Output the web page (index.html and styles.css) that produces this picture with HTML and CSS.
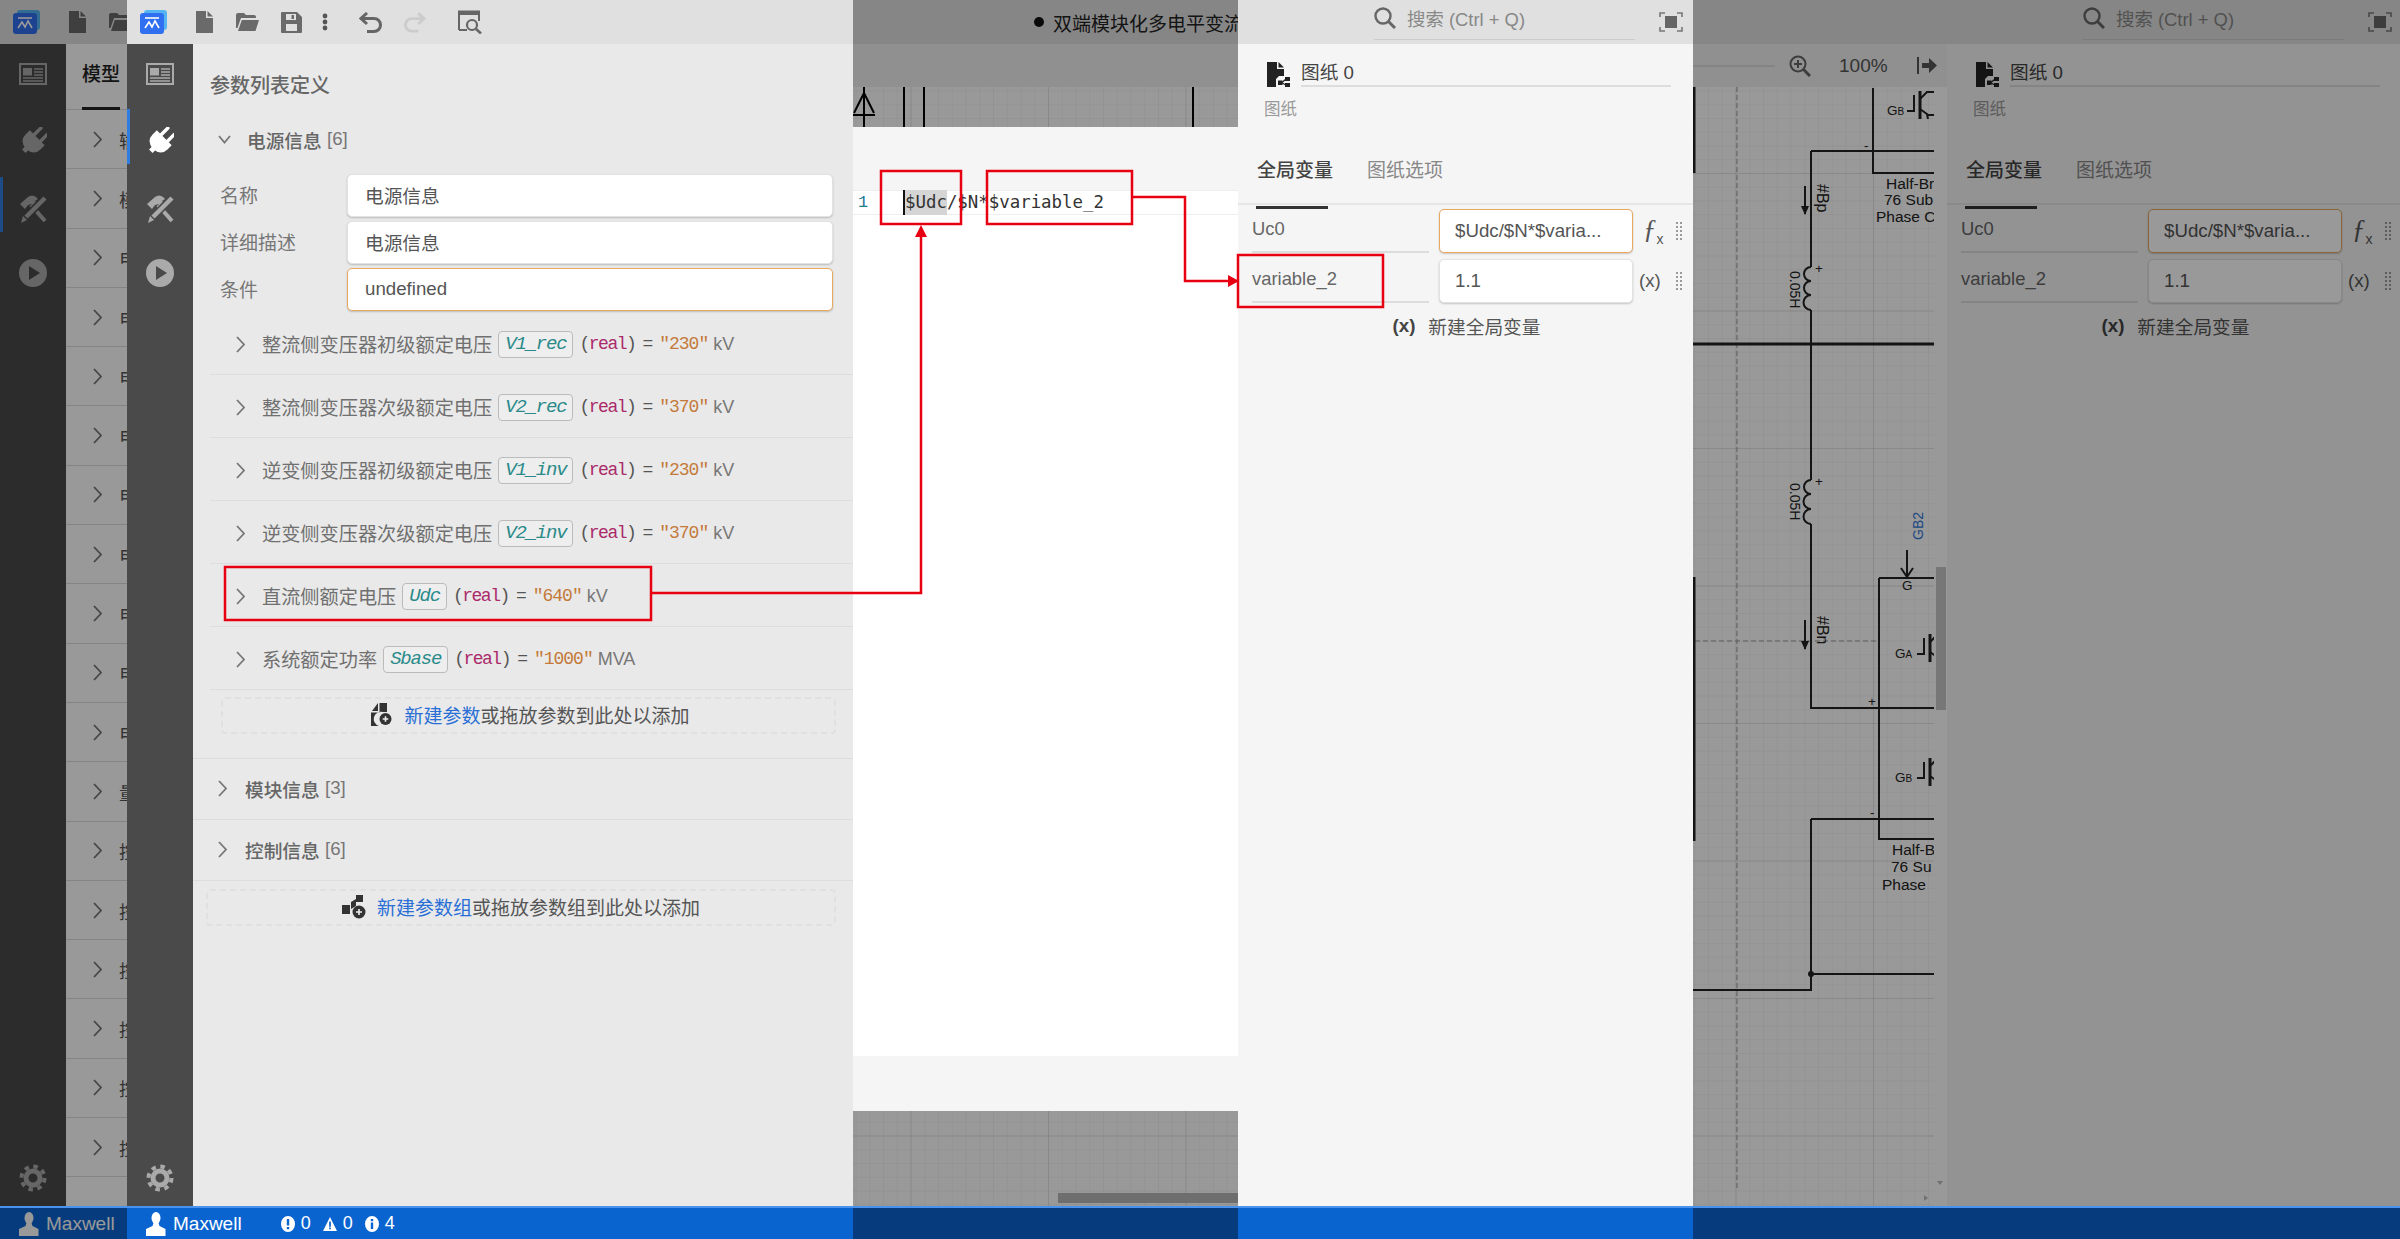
FILE: index.html
```html
<!DOCTYPE html>
<html lang="zh">
<head>
    <meta charset="UTF-8">
    <title>参数列表定义</title>
    <link rel="stylesheet" href="styles.css">
</head>
<body>

<!-- 图标 -->
<svg class="sprite" xmlns="http://www.w3.org/2000/svg">
    <symbol id="i-logo" viewBox="0 0 27 24">
        <rect x="4" y="0" width="23" height="20" rx="3" fill="#55b4f2"/>
        <rect x="0" y="3" width="24" height="21" rx="3" fill="#2f6ff0"/>
        <path d="M5 8h14" stroke="#fff" stroke-width="1.6" fill="none"/>
        <path d="M5 18l4-6 3 5 3-6 4 7" stroke="#fff" stroke-width="1.6" fill="none"/>
    </symbol>
    <symbol id="i-file" viewBox="0 0 17 22">
        <path d="M0 0h10v7h7v15H0zM11.500 0L17 5.500h-5.500z" fill="#6a6a6a"/>
    </symbol>
    <symbol id="i-folder" viewBox="0 0 23 18">
        <path d="M0 2q0-2 2-2h6l2 2h8q2 0 2 2v1H5L1.500 15H0zM5.800 7H23l-3.500 11H2z" fill="#6a6a6a"/>
    </symbol>
    <symbol id="i-save" viewBox="0 0 21 21">
        <path fill-rule="evenodd" d="M0 1q0-1 1-1h15l5 5v15q0 1-1 1H1q-1 0-1-1zM5 2v6h10V2zM5 12v7h11v-7z" fill="#6a6a6a"/>
        <rect x="10.500" y="3" width="2.500" height="4" fill="#6a6a6a"/>
    </symbol>
    <symbol id="i-dots" viewBox="0 0 6 18">
        <circle cx="3" cy="3" r="2.400" fill="#555"/><circle cx="3" cy="9" r="2.400" fill="#555"/><circle cx="3" cy="15" r="2.400" fill="#555"/>
    </symbol>
    <symbol id="i-undo" viewBox="0 0 23 21">
        <path d="M8 1L2 6.500 8 12M2 6.500h13a6.500 6.500 0 0 1 0 13H8" fill="none" stroke="currentColor" stroke-width="3"/>
    </symbol>
    <symbol id="i-redo" viewBox="0 0 23 21">
        <path d="M15 1l6 5.500L15 12M21 6.500H8a6.500 6.500 0 0 0 0 13h7" fill="none" stroke="currentColor" stroke-width="3"/>
    </symbol>
    <symbol id="i-docsearch" viewBox="0 0 24 24">
        <path d="M1 20V1.500h20V11M1 20h8" fill="none" stroke="#666" stroke-width="2"/>
        <rect x="1" y="1" width="20" height="4" fill="#666"/>
        <circle cx="14" cy="15" r="5" fill="none" stroke="#666" stroke-width="2.200"/>
        <path d="M18 19l5 4.500" stroke="#666" stroke-width="2.600"/>
    </symbol>
    <symbol id="i-news" viewBox="0 0 28 22">
        <rect x="1" y="1" width="26" height="20" fill="none" stroke="currentColor" stroke-width="2"/>
        <rect x="4" y="5" width="9" height="7.500" fill="currentColor"/>
        <path d="M15 6h9M15 9h9M15 12h9M4 15h20M4 18h20" stroke="currentColor" stroke-width="1.600"/>
    </symbol>
    <symbol id="i-plug" viewBox="0 0 28 30">
        <g transform="rotate(45 14 15)" fill="currentColor">
            <rect x="8" y="-2" width="3.400" height="13" rx="1.500"/>
            <rect x="17" y="-2" width="3.400" height="13" rx="1.500"/>
            <path d="M3.500 9h21v6q0 9-10.500 10Q3.500 24 3.500 15z"/>
            <rect x="11.500" y="23" width="5" height="5"/>
        </g>
    </symbol>
    <symbol id="i-tools" viewBox="0 0 27 28">
        <path d="M0 9l8-7q4-3 8 0l2 2-3 2 3 3-3 3-3-3-4 1-3 4z" fill="currentColor"/>
        <path d="M11 10l14 16" stroke="currentColor" stroke-width="4" fill="none"/>
        <path d="M25 3L6 22" stroke="#4a4a4a" stroke-width="7.500" fill="none"/>
        <path d="M25 3L6 22" stroke="currentColor" stroke-width="4.500" fill="none"/>
        <path d="M3 21l4 4-6 3z" fill="currentColor"/>
    </symbol>
    <symbol id="i-play" viewBox="0 0 28 28">
        <path fill-rule="evenodd" d="M14 0a14 14 0 1 0 0 28 14 14 0 0 0 0-28zM10 7l11 7-11 7z" fill="currentColor"/>
    </symbol>
    <symbol id="i-gear" viewBox="0 0 28 28">
        <circle cx="14" cy="14" r="11.500" fill="none" stroke="currentColor" stroke-width="4" stroke-dasharray="4.500 4.530"/>
        <circle cx="14" cy="14" r="7" fill="none" stroke="currentColor" stroke-width="5"/>
    </symbol>
    <symbol id="i-search" viewBox="0 0 22 22">
        <circle cx="9" cy="9" r="7.500" fill="none" stroke="#666" stroke-width="2.400"/>
        <path d="M14.500 14.500L21 21" stroke="#666" stroke-width="3"/>
    </symbol>
    <symbol id="i-focus" viewBox="0 0 24 20">
        <path d="M1 5V1h5M18 1h5v4M23 15v4h-5M6 19H1v-4" fill="none" stroke="#777" stroke-width="1.600"/>
        <rect x="6" y="4" width="12" height="12" fill="#666"/>
    </symbol>
    <symbol id="i-sheet" viewBox="0 0 23 25">
        <path d="M0 0h10v7h7v7h-5l-3 3v8H0z" fill="#222"/>
        <path d="M11.500 0L17 5.500h-5.500z" fill="#222"/>
        <rect x="11" y="18.500" width="4.500" height="4.500" fill="#222"/>
        <rect x="18" y="15" width="5" height="4" fill="#222"/>
        <rect x="18" y="21" width="5" height="4" fill="#222"/>
        <path d="M15 20.500l4-3.500M15 21l4 2" stroke="#222" stroke-width="1.200"/>
    </symbol>
    <symbol id="i-addparam" viewBox="0 0 21 23">
        <path d="M1 8l6-8v8z" fill="#333"/>
        <path d="M8.500 0H16v9h-4a7 7 0 0 0-4 14H0V9.500h8.500z" fill="#333"/>
        <circle cx="14.500" cy="16" r="6" fill="#333"/>
        <path d="M14.500 13.200v5.600M11.700 16h5.600" stroke="#eee" stroke-width="1.600"/>
    </symbol>
    <symbol id="i-addgroup" viewBox="0 0 24 24">
        <rect x="0" y="10" width="8" height="9" fill="#333"/>
        <path d="M9 7l5-3v7l-5 3z" fill="#333"/>
        <rect x="14" y="0" width="7" height="7" fill="#333"/>
        <circle cx="17" cy="17" r="6.500" fill="#333"/>
        <path d="M17 14v6M14 17h6" stroke="#eee" stroke-width="1.600"/>
    </symbol>
    <symbol id="i-user" viewBox="0 0 20 24">
        <ellipse cx="10" cy="6" rx="4.500" ry="6" fill="currentColor"/>
        <path d="M7.500 11h5l1 3 6 3v7H0v-7l6.500-3z" fill="currentColor"/>
    </symbol>
    <symbol id="i-error" viewBox="0 0 14 16">
        <path fill-rule="evenodd" d="M7 0a7 8 0 1 0 0 16A7 8 0 0 0 7 0zM5.800 3h2.400v6.500H5.800zM5.800 11h2.400v2.200H5.800z" fill="#fff"/>
    </symbol>
    <symbol id="i-warn" viewBox="0 0 16 16">
        <path fill-rule="evenodd" d="M8 0l8 16H0zM7 5h2v6H7zM7 12h2v2H7z" fill="#fff"/>
    </symbol>
    <symbol id="i-info" viewBox="0 0 14 16">
        <path fill-rule="evenodd" d="M7 0a7 8 0 1 0 0 16A7 8 0 0 0 7 0zM5.800 3h2.400v2.200H5.800zM5.800 6.500h2.400V13H5.800z" fill="#fff"/>
    </symbol>
    <symbol id="i-right" viewBox="0 0 9 17">
        <path d="M1 1l7 7.500L1 16" fill="none" stroke="#777" stroke-width="1.800"/>
    </symbol>
    <symbol id="i-down" viewBox="0 0 13 9">
        <path d="M1 1l5.500 6.500L12 1" fill="none" stroke="#777" stroke-width="1.800"/>
    </symbol>
    <symbol id="i-grip" viewBox="0 0 8 19">
        <path d="M1 1h2M5 1h2M1 5h2M5 5h2M1 9h2M5 9h2M1 13h2M5 13h2M1 17h2M5 17h2" stroke="#999" stroke-width="2"/>
    </symbol>
    <symbol id="i-zoomin" viewBox="0 0 22 22">
        <circle cx="9" cy="9" r="7.500" fill="none" stroke="#666" stroke-width="2"/>
        <path d="M14.500 14.500L21 21" stroke="#666" stroke-width="3"/>
        <path d="M5 9h8M9 5v8" stroke="#666" stroke-width="2"/>
    </symbol>
    <symbol id="i-collapse" viewBox="0 0 21 17">
        <path d="M1 0v17" stroke="#555" stroke-width="2"/>
        <path d="M5 6h7V1l8 7.500-8 7.500v-5H5z" fill="#555"/>
    </symbol>
    <symbol id="i-igbt" viewBox="0 0 27 30">
        <path d="M0 22h7V6" fill="none" stroke="#222" stroke-width="2"/>
        <path d="M13 2v28" stroke="#222" stroke-width="3"/>
        <path d="M13 10l7-7h7M13 20l7 5 1 5M21 26h6" fill="none" stroke="#222" stroke-width="2"/>
    </symbol>
</svg>

<div class="main">

    <!-- 左侧：变暗的模型列表 -->
    <section class="slice dim">
        <div class="toolbar">
            <svg class="t-logo"><use href="#i-logo"/></svg>
            <svg class="t-file"><use href="#i-file"/></svg>
            <svg class="t-folder"><use href="#i-folder"/></svg>
        </div>
        <div class="workspace">
            <nav class="rail rail-tools-on">
                <svg class="rail-news"><use href="#i-news"/></svg>
                <svg class="rail-plug"><use href="#i-plug"/></svg>
                <svg class="rail-tools"><use href="#i-tools"/></svg>
                <svg class="rail-play"><use href="#i-play"/></svg>
                <svg class="rail-gear"><use href="#i-gear"/></svg>
            </nav>
            <div class="model-list">
                <div class="model-tab"><span>模型</span></div>
                <div class="model-row"><svg class="chev"><use href="#i-right"/></svg>输</div>
                <div class="model-row"><svg class="chev"><use href="#i-right"/></svg>模</div>
                <div class="model-row"><svg class="chev"><use href="#i-right"/></svg>电</div>
                <div class="model-row"><svg class="chev"><use href="#i-right"/></svg>电</div>
                <div class="model-row"><svg class="chev"><use href="#i-right"/></svg>电</div>
                <div class="model-row"><svg class="chev"><use href="#i-right"/></svg>电</div>
                <div class="model-row"><svg class="chev"><use href="#i-right"/></svg>电</div>
                <div class="model-row"><svg class="chev"><use href="#i-right"/></svg>电</div>
                <div class="model-row"><svg class="chev"><use href="#i-right"/></svg>电</div>
                <div class="model-row"><svg class="chev"><use href="#i-right"/></svg>电</div>
                <div class="model-row"><svg class="chev"><use href="#i-right"/></svg>电</div>
                <div class="model-row"><svg class="chev"><use href="#i-right"/></svg>量</div>
                <div class="model-row"><svg class="chev"><use href="#i-right"/></svg>控</div>
                <div class="model-row"><svg class="chev"><use href="#i-right"/></svg>控</div>
                <div class="model-row"><svg class="chev"><use href="#i-right"/></svg>控</div>
                <div class="model-row"><svg class="chev"><use href="#i-right"/></svg>控</div>
                <div class="model-row"><svg class="chev"><use href="#i-right"/></svg>控</div>
                <div class="model-row"><svg class="chev"><use href="#i-right"/></svg>控</div>
            </div>
        </div>
    </section>

    <!-- 参数列表定义 -->
    <section class="slice">
        <div class="toolbar">
            <svg class="t-logo"><use href="#i-logo"/></svg>
            <svg class="t-file"><use href="#i-file"/></svg>
            <svg class="t-folder"><use href="#i-folder"/></svg>
            <svg class="t-save"><use href="#i-save"/></svg>
            <svg class="t-dots"><use href="#i-dots"/></svg>
            <svg class="t-undo"><use href="#i-undo"/></svg>
            <svg class="t-redo"><use href="#i-redo"/></svg>
            <svg class="t-doc"><use href="#i-docsearch"/></svg>
        </div>
        <div class="workspace">
            <nav class="rail rail-plug-on">
                <svg class="rail-news"><use href="#i-news"/></svg>
                <svg class="rail-plug rail-white"><use href="#i-plug"/></svg>
                <svg class="rail-tools"><use href="#i-tools"/></svg>
                <svg class="rail-play"><use href="#i-play"/></svg>
                <svg class="rail-gear"><use href="#i-gear"/></svg>
            </nav>
            <div class="params">
                <h2 class="page-title">参数列表定义</h2>

                <div class="group group-open">
                    <div class="group-head"><svg class="chev-down"><use href="#i-down"/></svg>电源信息 <span class="count">[6]</span></div>
                    <div class="form">
                        <label class="field"><span>名称</span><input class="input" value="电源信息"></label>
                        <label class="field"><span>详细描述</span><input class="input" value="电源信息"></label>
                        <label class="field"><span>条件</span><input class="input input-focus" value="undefined"></label>
                    </div>

                    <div class="param"><svg class="chev"><use href="#i-right"/></svg>整流侧变压器初级额定电压<code class="tag">V1_rec</code><code class="type">(<b>real</b>) = </code><code class="val">"230"</code><span class="unit">kV</span></div>
                    <div class="param"><svg class="chev"><use href="#i-right"/></svg>整流侧变压器次级额定电压<code class="tag">V2_rec</code><code class="type">(<b>real</b>) = </code><code class="val">"370"</code><span class="unit">kV</span></div>
                    <div class="param"><svg class="chev"><use href="#i-right"/></svg>逆变侧变压器初级额定电压<code class="tag">V1_inv</code><code class="type">(<b>real</b>) = </code><code class="val">"230"</code><span class="unit">kV</span></div>
                    <div class="param"><svg class="chev"><use href="#i-right"/></svg>逆变侧变压器次级额定电压<code class="tag">V2_inv</code><code class="type">(<b>real</b>) = </code><code class="val">"370"</code><span class="unit">kV</span></div>
                    <div class="param"><svg class="chev"><use href="#i-right"/></svg>直流侧额定电压<code class="tag">Udc</code><code class="type">(<b>real</b>) = </code><code class="val">"640"</code><span class="unit">kV</span></div>
                    <div class="param"><svg class="chev"><use href="#i-right"/></svg>系统额定功率<code class="tag">Sbase</code><code class="type">(<b>real</b>) = </code><code class="val">"1000"</code><span class="unit">MVA</span></div>

                    <div class="drop drop-param"><svg class="drop-icon"><use href="#i-addparam"/></svg><a>新建参数</a>或拖放参数到此处以添加</div>
                </div>

                <div class="group"><div class="group-head"><svg class="chev"><use href="#i-right"/></svg>模块信息 <span class="count">[3]</span></div></div>
                <div class="group"><div class="group-head"><svg class="chev"><use href="#i-right"/></svg>控制信息 <span class="count">[6]</span></div></div>

                <div class="drop drop-group"><svg class="drop-icon-wide"><use href="#i-addgroup"/></svg><a>新建参数组</a>或拖放参数组到此处以添加</div>
            </div>
        </div>
    </section>

    <!-- 中间：公式编辑器 -->
    <section class="slice center">
        <div class="title-bar dim"><span class="title-dot"></span>双端模块化多电平变流器</div>
        <div class="canvas-tools dim"></div>
        <div class="canvas canvas-top dim">
            <svg class="wires" viewBox="0 0 385 40">
                <path d="M0 28h22M11 0v40M1 26L11 6l10 20" fill="none" stroke="#000" stroke-width="2"/>
                <path d="M51 0v40M71 0v40M340 0v40" stroke="#000" stroke-width="2"/>
            </svg>
        </div>
        <div class="editor">
            <div class="editor-top"></div>
            <div class="code-line"><span class="line-no">1</span><code class="code"><span class="sel">$Udc</span>/$N*$variable_2</code></div>
        </div>
        <div class="editor-foot"></div>
        <div class="canvas canvas-bottom dim"><div class="hscroll"></div></div>
    </section>

    <!-- 图纸属性面板 -->
    <section class="slice">
        <aside class="panel">
            <div class="panel-head">
                <div class="search"><svg class="search-icon"><use href="#i-search"/></svg>搜索 (Ctrl + Q)</div>
                <svg class="focus-icon"><use href="#i-focus"/></svg>
            </div>
            <div class="sheet-title"><svg class="sheet-icon"><use href="#i-sheet"/></svg><div class="sheet-name">图纸 0</div></div>
            <div class="sheet-sub">图纸</div>
            <div class="tabs"><span class="tab tab-on">全局变量</span><span class="tab">图纸选项</span></div>
            <div class="var-row">
                <div class="var-name">Uc0</div>
                <input class="input var-input input-focus" value="$Udc/$N*$varia...">
                <span class="fx">ƒ<sub>x</sub></span>
                <svg class="grip"><use href="#i-grip"/></svg>
            </div>
            <div class="var-row">
                <div class="var-name">variable_2</div>
                <input class="input var-input" value="1.1">
                <span class="var-x">(x)</span>
                <svg class="grip"><use href="#i-grip"/></svg>
            </div>
            <div class="var-new"><b>(x)</b>新建全局变量</div>
        </aside>
    </section>

    <!-- 右侧：变暗的画布和面板 -->
    <section class="slice dim split">
        <div class="right-col">
            <div class="title-bar"></div>
            <div class="canvas-tools canvas-zoom">
                <span class="zoom-line"></span>
                <svg class="zoom-icon"><use href="#i-zoomin"/></svg>
                <span class="zoom-text">100%</span>
                <svg class="collapse-icon"><use href="#i-collapse"/></svg>
            </div>
            <div class="canvas canvas-main">
                <svg class="circuit" viewBox="0 0 254 1119">
                    <path class="dash" d="M44 0v1103M2 554h184"/>
                    <path class="thick" d="M1 0v86M1 490v264M0 257h241"/>
                    <path class="wire" d="M180 1v85h61M118 64h123M118 64v116M118 223v170M118 437v184h123"/>
                    <path class="wire" d="M186 491h55M186 491v261h55M118 732h123M118 732v171H0M118 887h123"/>
                    <path class="wire" d="M118 180a7 7 0 0 0 0 14a7 7 0 0 0 0 14a7 7 0 0 0 0 15M118 393a7 7 0 0 0 0 14a7 7 0 0 0 0 15a7 7 0 0 0 0 15"/>
                    <circle cx="118" cy="887" r="3" fill="#222"/>
                    <path class="wire" d="M112 99v28M112 533v29M214 463v27M208 481l6 9 6-9"/>
                    <path d="M108 119l4 9 4-9zM108 554l4 9 4-9z" fill="#222"/>
                    <text class="tx" transform="translate(124 97) rotate(90)">#Bp</text>
                    <text class="tx" transform="translate(124 529) rotate(90)">#Bn</text>
                    <text class="tx tx-val" transform="translate(97 184) rotate(90)">0.05H</text>
                    <text class="tx tx-val" transform="translate(97 396) rotate(90)">0.05H</text>
                    <text class="tx tx-val tx-blue" transform="translate(230 453) rotate(-90)">GB2</text>
                    <text class="tx-sm" x="122" y="186">+</text>
                    <text class="tx-sm" x="122" y="399">+</text>
                    <text class="tx-sm" x="175" y="619">+</text>
                    <text class="tx-sm" x="177" y="730">-</text>
                    <text class="tx-sm" x="171" y="63">-</text>
                    <text class="tx-sm" x="209" y="503">G</text>
                    <text class="tx-sm" x="202" y="571">G<tspan class="tx-xs">A</tspan></text>
                    <text class="tx-sm" x="202" y="695">G<tspan class="tx-xs">B</tspan></text>
                    <text class="tx-sm" x="194" y="28">G<tspan class="tx-xs">B</tspan></text>
                    <svg x="214" y="2" width="27" height="30" viewBox="0 0 27 30"><use href="#i-igbt"/></svg>
                    <svg x="224" y="545" width="17" height="30" viewBox="0 0 17 30"><use href="#i-igbt" width="27" height="30"/></svg>
                    <svg x="224" y="669" width="17" height="30" viewBox="0 0 17 30"><use href="#i-igbt" width="27" height="30"/></svg>
                    <text class="tx-lg" x="193" y="102">Half-Br</text>
                    <text class="tx-lg" x="191" y="118">76 Sub</text>
                    <text class="tx-lg" x="183" y="135">Phase C</text>
                    <text class="tx-lg" x="199" y="768">Half-B</text>
                    <text class="tx-lg" x="198" y="785">76 Su</text>
                    <text class="tx-lg" x="189" y="803">Phase</text>
                    <rect x="241" y="0" width="13" height="1119" fill="#fff"/>
                    <rect x="243" y="480" width="10" height="143" fill="#c6c6c6"/>
                    <path d="M244 1094h6l-3 4zM231 1108l4 3-4 3z" fill="#bbb"/>
                </svg>
            </div>
        </div>
        <aside class="panel">
            <div class="panel-head">
                <div class="search"><svg class="search-icon"><use href="#i-search"/></svg>搜索 (Ctrl + Q)</div>
                <svg class="focus-icon"><use href="#i-focus"/></svg>
            </div>
            <div class="sheet-title"><svg class="sheet-icon"><use href="#i-sheet"/></svg><div class="sheet-name">图纸 0</div></div>
            <div class="sheet-sub">图纸</div>
            <div class="tabs"><span class="tab tab-on">全局变量</span><span class="tab">图纸选项</span></div>
            <div class="var-row">
                <div class="var-name">Uc0</div>
                <input class="input var-input input-focus" value="$Udc/$N*$varia...">
                <span class="fx">ƒ<sub>x</sub></span>
                <svg class="grip"><use href="#i-grip"/></svg>
            </div>
            <div class="var-row">
                <div class="var-name">variable_2</div>
                <input class="input var-input" value="1.1">
                <span class="var-x">(x)</span>
                <svg class="grip"><use href="#i-grip"/></svg>
            </div>
            <div class="var-new"><b>(x)</b>新建全局变量</div>
        </aside>
    </section>
</div>

<!-- 状态栏 -->
<footer class="status">
    <div class="status-cell dim"><svg class="user-icon"><use href="#i-user"/></svg>Maxwell</div>
    <div class="status-cell">
        <svg class="user-icon"><use href="#i-user"/></svg>Maxwell
        <span class="problems">
            <svg class="st-icon"><use href="#i-error"/></svg>0
            <svg class="st-icon"><use href="#i-warn"/></svg>0
            <svg class="st-icon"><use href="#i-info"/></svg>4
        </span>
    </div>
    <div class="status-cell dim"></div>
    <div class="status-cell"></div>
    <div class="status-cell dim"></div>
</footer>

<!-- 红色标注 -->
<svg class="notes" viewBox="0 0 2400 1239">
    <path class="note" d="M225 567h426v53H225zM881 171h80v53h-80zM987 171h145v53H987zM1238 255h145v52h-145z"/>
    <path class="note" d="M651 593h270V234M1132 197h53v84h44"/>
    <path class="note-tip" d="M915 237l6-12 6 12zM1228 275l11 6-11 6z"/>
</svg>

</body>
</html>
```

FILE: styles.css
```css
* {
    box-sizing: border-box;
}
body {
    margin: 0;
    width: 2400px;
    height: 1239px;
    overflow: hidden;
    position: relative;
    font-family: "Liberation Sans", "Noto Sans CJK SC", sans-serif;
    font-size: 18.7px;
    color: #555;
    background: #fff;
}
.sprite {
    display: none;
}
.main, .status {
    display: grid;
    grid-template-columns: 127px 726px 385px 455px 707px;
}
.main {
    height: 1206px;
}
.slice {
    position: relative;
    overflow: hidden;
    height: 1206px;
}
.dim {
    position: relative;
}
.dim::after {
    content: "";
    position: absolute;
    inset: 0;
    background: rgba(0, 0, 0, 0.4);
    pointer-events: none;
}

/* 工具栏 */
.toolbar {
    display: flex;
    align-items: center;
    height: 44px;
    width: 726px;
    background: #e0e0e0;
    color: #666;
}
.t-logo { width: 27px; height: 24px; margin-left: 13px; }
.t-file { width: 17px; height: 22px; margin-left: 29px; }
.t-folder { width: 23px; height: 18px; margin-left: 23px; }
.t-save { width: 21px; height: 21px; margin-left: 22px; }
.t-dots { width: 6px; height: 18px; margin-left: 20px; }
.t-undo { width: 23px; height: 21px; margin-left: 31px; }
.t-redo { width: 22px; height: 21px; margin-left: 22px; color: #ccc; }
.t-doc { width: 24px; height: 24px; margin-left: 32px; }

.workspace {
    display: flex;
    height: 1162px;
}
.rail {
    position: relative;
    width: 66px;
    flex: none;
    background: #4a4a4a;
    color: #aaa;
    display: flex;
    flex-direction: column;
    align-items: center;
    padding-top: 19px;
}
.rail svg {
    flex: none;
    overflow: visible;
}
.rail-news { width: 28px; height: 22px; }
.rail-plug { width: 28px; height: 30px; margin-top: 42px; }
.rail-tools { width: 27px; height: 28px; margin-top: 38px; }
.rail-play { width: 28px; height: 28px; margin-top: 36px; }
.rail-gear { width: 28px; height: 28px; margin-top: auto; margin-bottom: 14px; }
.rail-white { color: #fff; }
.rail::before {
    content: "";
    position: absolute;
    left: 0;
    width: 3px;
    height: 55px;
    background: #2f7de0;
}
.rail-tools-on::before { top: 133px; }
.rail-plug-on::before { top: 65px; }

/* 模型列表 */
.model-list {
    width: 61px;
    flex: none;
    background: #fff;
    overflow: hidden;
    white-space: nowrap;
}
.model-tab {
    height: 66px;
    padding: 15px 0 0 16px;
    font-size: 19px;
    font-weight: 500;
    color: #222;
    border-bottom: 1px solid #ddd;
}
.model-tab span {
    display: block;
    width: 38px;
    height: 51px;
    border-bottom: 3px solid #222;
}
.model-row {
    display: flex;
    align-items: center;
    height: 59.3px;
    padding-left: 27px;
    color: #555;
    border-bottom: 1px solid #ddd;
}
.chev {
    width: 9px;
    height: 17px;
    flex: none;
    margin-right: 17px;
}
.chev-down {
    width: 13px;
    height: 9px;
    flex: none;
    margin: 0 16px 0 0;
}

/* 参数列表 */
.params {
    width: 660px;
    flex: none;
    background: #e9e9e9;
}
.page-title {
    margin: 0;
    height: 66px;
    padding: 22px 0 0 17px;
    font-size: 20px;
    line-height: 40px;
    font-weight: 500;
    color: #666;
}
.group {
    border-bottom: 1px solid #ddd;
}
.group-open {
    padding-bottom: 24px;
}
.group-head {
    display: flex;
    align-items: center;
    height: 60px;
    padding: 0 0 2px 25px;
    font-weight: 500;
    color: #666;
    white-space: pre;
}
.group-head .chev {
    margin-right: 18px;
}
.count {
    font-weight: 400;
    color: #777;
}
.form {
    display: flex;
    flex-direction: column;
    gap: 4px;
    padding: 4px 20px 0 27px;
}
.field {
    display: flex;
    align-items: center;
    color: #777;
    font-size: 19px;
}
.field span {
    width: 127px;
    flex: none;
    padding-bottom: 2px;
}
.input {
    display: block;
    width: 100%;
    height: 43px;
    padding: 0 17px 2px;
    border: 1px solid #e2e2e2;
    border-radius: 5px;
    background: #fff;
    box-shadow: 0 1px 2px rgba(0, 0, 0, 0.2);
    font: inherit;
    font-size: 18.7px;
    color: #555;
    outline: none;
}
.input-focus {
    border: 1.5px solid #e8a95c;
}
.param {
    display: flex;
    align-items: center;
    height: 63px;
    margin-left: 17px;
    padding: 2px 0 0 26px;
    font-size: 19.2px;
    color: #707070;
    border-bottom: 1px solid #ddd;
}
.form + .param {
    margin-top: 1px;
}
.param code {
    font-family: "Liberation Mono", monospace;
}
.tag {
    display: inline-block;
    margin: 0 6px 0 6px;
    padding: 0 6px;
    height: 27px;
    line-height: 25px;
    font-size: 19px;
    letter-spacing: -1.2px;
    font-style: italic;
    color: #2a8a8a;
    background: #eee;
    border: 1px solid #bbb;
    border-radius: 4px;
}
.type {
    font-size: 18px;
    letter-spacing: -1.5px;
    word-spacing: -2px;
    color: #555;
    white-space: pre;
}
.type b {
    font-weight: 400;
    color: #ab2a6a;
}
.val {
    font-size: 18px;
    letter-spacing: -1px;
    color: #c47a3a;
}
.unit {
    margin-left: 5px;
    font-size: 18px;
    color: #777;
}
.drop {
    display: flex;
    align-items: center;
    justify-content: center;
    height: 37px;
    padding-bottom: 2px;
    font-size: 19px;
    color: #555;
    border: 2px dashed #e0e0e0;
    border-radius: 4px;
}
.drop a {
    color: #2a6fd6;
}
.drop-param {
    margin: 7px 17px 0 28px;
    padding-left: 4px;
}
.drop-group {
    margin: 8px 17px 0 13px;
}
.drop-icon { width: 21px; height: 23px; margin-right: 12px; }
.drop-icon-wide { width: 24px; height: 24px; margin-right: 11px; }

/* 中间部分 */
.center {
    display: flex;
    flex-direction: column;
}
.title-bar {
    height: 44px;
    flex: none;
    background: #e0e0e0;
    display: flex;
    align-items: center;
    padding-left: 181px;
    font-size: 19px;
    color: #222;
    white-space: nowrap;
}
.title-dot {
    width: 10px;
    height: 10px;
    flex: none;
    border-radius: 50%;
    background: #111;
    margin-right: 9px;
}
.canvas-tools {
    height: 43px;
    flex: none;
    background: #f0f0f0;
}
.canvas {
    background-color: #fff;
    background-image:
        linear-gradient(#00000014 1px, transparent 1px),
        linear-gradient(90deg, #00000012 1px, transparent 1px),
        linear-gradient(#00000008 1px, transparent 1px),
        linear-gradient(90deg, #00000009 1px, transparent 1px);
    background-size: 137.5px 137.5px, 137.5px 137.5px, 13.75px 13.75px, 13.75px 13.75px;
    background-position: 0 35.5px, 85.5px 0, 0 8px, 3px 0;
    background-attachment: fixed;
}
.canvas-top {
    height: 40px;
    flex: none;
}
.wires {
    display: block;
    width: 385px;
    height: 40px;
}
.editor {
    height: 929px;
    flex: none;
    background: #fff;
}
.editor-top {
    height: 63px;
    background: #f5f5f5;
}
.code-line {
    display: flex;
    align-items: center;
    height: 25px;
    background: #fff;
    border-top: 1px solid #eee;
    border-bottom: 1px solid #eee;
}
.line-no {
    width: 50px;
    padding-left: 5px;
    font-family: "Liberation Mono", monospace;
    font-size: 17px;
    color: #237893;
}
.code {
    font-family: "DejaVu Sans Mono", monospace;
    font-size: 17.4px;
    color: #333;
    border-left: 2px solid #111;
    line-height: 25px;
    margin-top: -1px;
}
.sel {
    display: inline-block;
    background: #d5d5d5;
}
.editor-foot {
    height: 55px;
    flex: none;
    background: #f5f5f5;
}
.canvas-bottom {
    flex: 1;
    position: relative;
}
.hscroll {
    position: absolute;
    left: 205px;
    right: 0;
    bottom: 3px;
    height: 10px;
    background: #b8b8b8;
}

/* 图纸属性面板 */
.panel {
    width: 455px;
    height: 1206px;
    flex: none;
    background: #f5f5f5;
    overflow: hidden;
}
.panel-head {
    display: flex;
    height: 44px;
    padding-left: 136px;
    background: #e0e0e0;
}
.search {
    display: flex;
    align-items: center;
    width: 261px;
    height: 40px;
    padding-bottom: 3px;
    border-bottom: 1px solid #ccc;
    color: #888;
    font-size: 18.4px;
}
.search-icon {
    width: 22px;
    height: 22px;
    margin-right: 11px;
}
.focus-icon {
    width: 24px;
    height: 20px;
    margin: 12px 0 0 24px;
}
.sheet-title {
    display: flex;
    align-items: flex-end;
    height: 43px;
    padding-left: 29px;
}
.sheet-icon {
    width: 23px;
    height: 25px;
    margin-right: 11px;
}
.sheet-name {
    width: 370px;
    height: 29px;
    line-height: 30px;
    color: #444;
    border-bottom: 2px solid #ddd;
}
.sheet-sub {
    height: 46px;
    padding: 9px 0 0 26px;
    font-size: 16.5px;
    color: #999;
}
.tabs {
    display: flex;
    gap: 34px;
    height: 72px;
    padding: 23px 0 0 19px;
    border-bottom: 2px solid #e6e6e6;
}
.tab {
    position: relative;
    font-size: 19px;
    line-height: 30px;
    color: #888;
    white-space: nowrap;
}
.tab-on {
    color: #444;
    font-weight: 500;
}
.tab-on::after {
    content: "";
    position: absolute;
    left: -1px;
    right: 5px;
    top: 50px;
    height: 3px;
    background: #333;
}
.var-row {
    display: flex;
    align-items: center;
    height: 44px;
    margin: 4px 0 6px 14px;
}
.var-row + .var-row {
    margin-top: 0;
}
.var-name {
    width: 177px;
    height: 43px;
    margin-right: 10px;
    padding-top: 6px;
    line-height: 26px;
    color: #666;
    border-bottom: 2px solid #ddd;
    font-size: 18.4px;
}
.var-input {
    width: 194px;
    height: 44px;
    padding: 0 15px;
    flex: none;
}
.fx, .var-x {
    width: 42px;
    padding-left: 10px;
    font-family: "Liberation Serif", serif;
    font-size: 27px;
    font-style: italic;
    color: #555;
}
.fx sub {
    font-family: "Liberation Sans", sans-serif;
    font-style: normal;
    font-size: 14px;
}
.var-x {
    font-family: "Liberation Sans", sans-serif;
    font-style: normal;
    font-size: 18.7px;
    padding-left: 6px;
}
.grip {
    width: 8px;
    height: 19px;
    flex: none;
}
.var-new {
    display: flex;
    justify-content: center;
    align-items: center;
    gap: 13px;
    height: 36px;
    padding: 0 0 3px 2px;
    color: #555;
    font-size: 18.7px;
}
.var-new b {
    color: #444;
}

/* 右侧画布 */
.split {
    display: flex;
}
.right-col {
    width: 254px;
    flex: none;
    display: flex;
    flex-direction: column;
}
.right-col .title-bar {
    padding: 0;
}
.canvas-zoom {
    display: flex;
    align-items: center;
    color: #555;
    font-size: 19px;
}
.zoom-line {
    width: 82px;
    height: 2px;
    background: #ddd;
}
.zoom-icon {
    width: 22px;
    height: 22px;
    margin-left: 14px;
}
.zoom-text {
    margin-left: 28px;
    font-size: 19px;
}
.collapse-icon {
    width: 21px;
    height: 17px;
    margin-left: 29px;
}
.canvas-main {
    flex: 1;
}
.circuit {
    display: block;
    width: 254px;
    height: 1119px;
}
.wire {
    fill: none;
    stroke: #222;
    stroke-width: 2;
}
.thick {
    fill: none;
    stroke: #222;
    stroke-width: 3;
}
.dash {
    fill: none;
    stroke: #999;
    stroke-width: 1;
    stroke-dasharray: 5 3;
}
.tx {
    font-size: 16px;
    fill: #222;
}
.tx-val {
    font-size: 14px;
}
.tx-blue {
    fill: #2f78d8;
}
.tx-sm {
    font-size: 13.5px;
    fill: #222;
}
.tx-xs {
    font-size: 10px;
}
.tx-lg {
    font-size: 15.5px;
    fill: #222;
}

/* 状态栏 */
.status {
    height: 33px;
}
.status-cell {
    display: flex;
    align-items: center;
    height: 33px;
    padding-left: 19px;
    background: #0a64d0;
    border-top: 2px solid #4a93ea;
    color: #fff;
    font-size: 19px;
    white-space: nowrap;
}
.user-icon {
    width: 20px;
    height: 24px;
    margin-right: 7px;
}
.problems {
    display: flex;
    align-items: center;
    margin-left: 39px;
    font-size: 18px;
}
.st-icon {
    width: 14px;
    height: 16px;
    margin: 0 6px 0 12px;
}
.st-icon:first-child {
    margin-left: 0;
}

/* 标注 */
.notes {
    position: absolute;
    left: 0;
    top: 0;
    width: 2400px;
    height: 1239px;
    pointer-events: none;
}
.note {
    fill: none;
    stroke: #e60012;
    stroke-width: 2.5;
}
.note-tip {
    fill: #e60012;
}
```
